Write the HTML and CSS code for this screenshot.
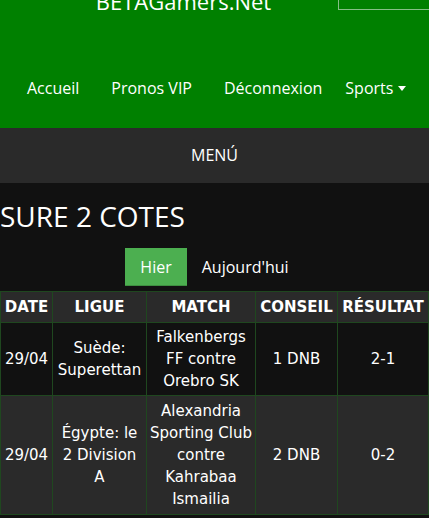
FILE: index.html
```html
<!DOCTYPE html>
<html>
<head>
  <meta charset="utf-8">
  <meta name="viewport" content="width=device-width, initial-scale=1">
  <title>BETAGamers.Net</title>
  <link rel="stylesheet" href="styles.css">
</head>
<body>
  <div id="header">
    <div id="brand-row">
      <div id="brand">BETAGamers.Net</div>
      <div id="search-box"></div>
    </div>
    <div id="nav">
      <a href="#">Accueil</a>
      <a href="#">Pronos VIP</a>
      <a href="#">Déconnexion</a>
      <a href="#" class="dropdown">Sports <span class="caret"></span></a>
    </div>
  </div>

  <div id="menu-bar">MENÚ</div>

  <div id="content">
    <h1 class="page-title">SURE 2 COTES</h1>

    <div class="tabs">
      <a href="#" class="tab active">Hier</a>
      <a href="#" class="tab">Aujourd'hui</a>
    </div>

    <table class="tips">
      <thead>
        <tr>
          <th class="col-date">DATE</th>
          <th class="col-league">LIGUE</th>
          <th class="col-match">MATCH</th>
          <th class="col-tip">CONSEIL</th>
          <th class="col-result">RÉSULTAT</th>
        </tr>
      </thead>
      <tbody>
        <tr>
          <td>29/04</td>
          <td class="league">Suède: Superettan</td>
          <td>Falkenbergs FF contre Orebro SK</td>
          <td>1 DNB</td>
          <td>2-1</td>
        </tr>
        <tr>
          <td>29/04</td>
          <td class="league">Égypte: le 2 Division A</td>
          <td>Alexandria Sporting Club contre Kahrabaa Ismailia</td>
          <td>2 DNB</td>
          <td>0-2</td>
        </tr>
      </tbody>
    </table>
  </div>
</body>
</html>
```

FILE: styles.css
```css
body {
  margin: 0;
  padding: 0;
  background-color: #111111;
  color: #ffffff;
  font-family: "Open Sans", sans-serif;
  overflow: hidden;
}

a {
  color: #ffffff;
  text-decoration: none;
}

/* green top header */
#header {
  background-color: #008000;
  height: 128px;
}

#brand-row {
  display: flex;
  align-items: flex-start;
  height: 16px;
}

#brand {
  flex: 1;
  padding-left: 29px;
  margin-top: -14px;
  text-align: center;
  font-size: 22px;
  line-height: 30px;
}

/* search field, mostly scrolled out of view */
#search-box {
  width: 90px;
  height: 9px;
  border-left: 1px solid #86bf86;
  border-bottom: 1px solid #86bf86;
}

#nav {
  display: flex;
  padding: 62px 0 0 11px;
  font-size: 16px;
  line-height: 20px;
}

#nav a {
  padding: 0 16px;
}

#nav a.dropdown {
  padding-left: 7px;
  padding-right: 0;
}

.caret {
  display: inline-block;
  width: 0;
  height: 0;
  vertical-align: 3px;
  border-left: 4px solid transparent;
  border-right: 4px solid transparent;
  border-top: 5px solid #ffffff;
}

#menu-bar {
  background-color: #2a2a2a;
  height: 55px;
  line-height: 55px;
  text-align: center;
  font-size: 16px;
}

#content {
  padding-top: 13px;
}

.page-title {
  margin: 0;
  font-size: 28px;
  font-weight: normal;
  line-height: 40px;
}

.tabs {
  display: flex;
  justify-content: center;
  margin-top: 12px;
}

.tab {
  padding: 0 15px;
  height: 38px;
  line-height: 38px;
  font-size: 16px;
}

.tab.active {
  background-color: #4caf50;
  box-shadow: inset 0 -1px 0 #3e8f41;
}

/* tips table */
.tips {
  width: 100%;
  margin-top: 5px;
  border-collapse: collapse;
  table-layout: fixed;
  font-family: "DejaVu Sans", sans-serif;
  font-size: 15px;
  line-height: 22px;
}

.tips th,
.tips td {
  border: 1px solid #1f471f;
  padding: 3px 2px;
  text-align: center;
  vertical-align: middle;
}

.tips th {
  padding: 4px 2px;
  background-color: #2a2a2a;
  font-weight: bold;
}

.tips td.league {
  padding-left: 3px;
  padding-right: 3px;
}

.tips tbody tr:nth-child(even) td {
  padding-top: 4px;
  padding-bottom: 4px;
  background-color: #2a2a2a;
}

.col-date { width: 47px; }
.col-league { width: 89px; }
.col-match { width: 104px; }
.col-tip { width: 77px; }
```
